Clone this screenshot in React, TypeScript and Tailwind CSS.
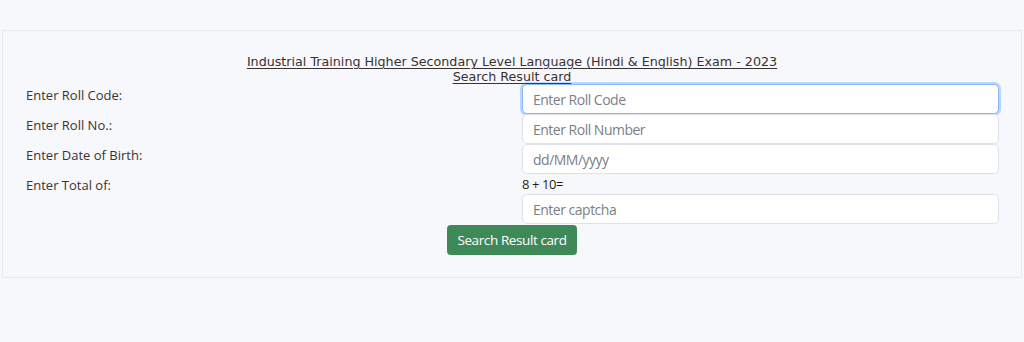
const labelFont = { fontFamily: '"Open Sans", "Noto Sans", sans-serif' }

function Field({ placeholder, focused }: { placeholder: string; focused?: boolean }) {
  return (
    <input
      type="text"
      placeholder={placeholder}
      className={
        'block h-[30px] w-[477px] rounded-[5px] border bg-white px-[10px] text-[14px] tracking-[-0.5px] text-[#212529] outline-none placeholder:text-[#7a7f86] ' +
        (focused ? 'border-[#86b7fe] shadow-[0_0_0_2px_rgba(13,110,253,0.25)]' : 'border-[#dee2e6]')
      }
      style={labelFont}
    />
  )
}

export default function App() {
  const rows = [
    { label: 'Enter Roll Code:', placeholder: 'Enter Roll Code', focused: true },
    { label: 'Enter Roll No.:', placeholder: 'Enter Roll Number' },
    { label: 'Enter Date of Birth:', placeholder: 'dd/MM/yyyy' },
  ]

  return (
    <div className="min-h-[342px] w-full bg-[#f7f8fb] pt-[30px]">
      <div className="mx-[2px] border border-[#e7e8ed] bg-[#f7f8fb] pb-[22px] pt-[23px]">
        <div
          className="text-center text-[12.7px] leading-[15px] text-[#3b3030] underline underline-offset-2"
          style={{ fontFamily: '"DejaVu Sans", "Open Sans", sans-serif' }}
        >
          Industrial Training Higher Secondary Level Language (Hindi &amp; English) Exam - 2023
          <br />
          Search Result card
        </div>

        <div className="flex flex-col" style={labelFont}>
          {rows.map((row) => (
            <div key={row.label} className="flex">
              <div className="w-[519px] pl-[23px] text-[13px] leading-[22px] text-[#3b3333]">{row.label}</div>
              <Field placeholder={row.placeholder} focused={row.focused} />
            </div>
          ))}

          <div className="flex">
            <div className="w-[519px] pl-[23px] text-[13px] leading-[22px] text-[#3b3333]">Enter Total of:</div>
            <div className="flex flex-col">
              <div className="pb-[2px] pt-[3px] text-[13px] leading-[15px] tracking-[-0.4px] text-[#231f1f]">8 + 10=</div>
              <Field placeholder="Enter captcha" />
            </div>
          </div>

          <div className="flex justify-center pt-[1px]">
            <button
              type="button"
              className="h-[30px] rounded-[4px] bg-[#3f8858] px-[10px] text-[13.5px] tracking-[-0.4px] text-white"
            >
              Search Result card
            </button>
          </div>
        </div>
      </div>
    </div>
  )
}
